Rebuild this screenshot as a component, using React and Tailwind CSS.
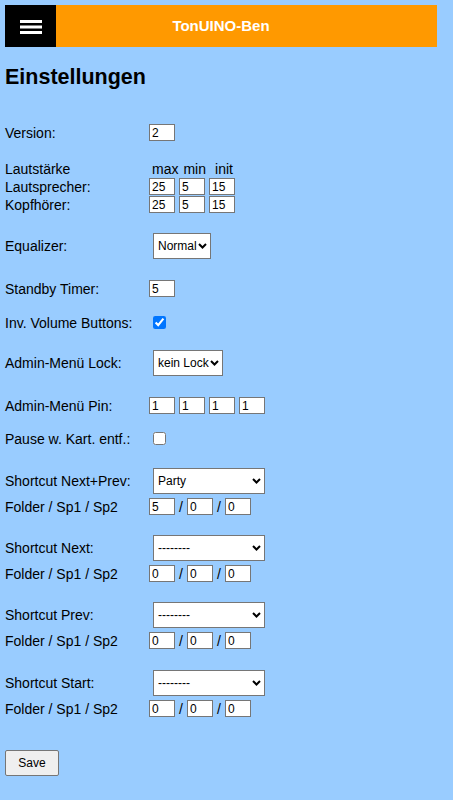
import { useState } from "react";

const font = { fontFamily: '"Liberation Sans", Arial, sans-serif' };

function NumBox({ value, onChange }) {
  return (
    <input
      type="text"
      value={value}
      onChange={(e) => onChange(e.target.value)}
      className="w-[26px] h-[17px] border border-[#767676] bg-white px-[2px] text-[12px] leading-[15px] text-black outline-none"
    />
  );
}

function Chevron() {
  return (
    <svg
      className="absolute right-[4px] top-1/2 -translate-y-1/2 pointer-events-none"
      width="9"
      height="6"
      viewBox="0 0 9 6"
      fill="none"
    >
      <path d="M1 1 L4.5 4.5 L8 1" stroke="#000" strokeWidth="2" />
    </svg>
  );
}

function Dropdown({ value, options, onChange, width }) {
  return (
    <div className={`relative ml-[4px] ${width}`}>
      <select
        value={value}
        onChange={(e) => onChange(e.target.value)}
        className="appearance-none w-full h-[26px] border border-[#767676] bg-white pl-[4px] pr-[1px] text-[12px] text-black outline-none"
      >
        {options.map((o) => (
          <option key={o} value={o}>
            {o}
          </option>
        ))}
      </select>
      <Chevron />
    </div>
  );
}

function Row({ label, className = "", children }) {
  return (
    <div className={`flex items-center ${className}`}>
      <div className="w-[144px] shrink-0">{label}</div>
      {children}
    </div>
  );
}

const shortcutOptions = ["--------", "Party", "Hörspiel", "Album", "Einzel"];

function Shortcut({ label, top, data, onChange }) {
  return (
    <>
      <Row label={label} className={`h-[26px] ${top}`}>
        <Dropdown
          value={data.mode}
          options={shortcutOptions}
          width="w-[112px]"
          onChange={(v) => onChange({ ...data, mode: v })}
        />
      </Row>
      <Row label="Folder / Sp1 / Sp2" className="h-[17px] mt-[4px]">
        <NumBox value={data.folder} onChange={(v) => onChange({ ...data, folder: v })} />
        <span className="w-[12px] text-center">/</span>
        <NumBox value={data.sp1} onChange={(v) => onChange({ ...data, sp1: v })} />
        <span className="w-[12px] text-center">/</span>
        <NumBox value={data.sp2} onChange={(v) => onChange({ ...data, sp2: v })} />
      </Row>
    </>
  );
}

export default function App() {
  const [version, setVersion] = useState("2");
  const [speaker, setSpeaker] = useState({ max: "25", min: "5", init: "15" });
  const [phones, setPhones] = useState({ max: "25", min: "5", init: "15" });
  const [eq, setEq] = useState("Normal");
  const [standby, setStandby] = useState("5");
  const [invVolume, setInvVolume] = useState(true);
  const [lock, setLock] = useState("kein Lock");
  const [pin, setPin] = useState(["1", "1", "1", "1"]);
  const [pause, setPause] = useState(false);
  const [shortcuts, setShortcuts] = useState([
    { mode: "Party", folder: "5", sp1: "0", sp2: "0" },
    { mode: "--------", folder: "0", sp1: "0", sp2: "0" },
    { mode: "--------", folder: "0", sp1: "0", sp2: "0" },
    { mode: "--------", folder: "0", sp1: "0", sp2: "0" },
  ]);

  const setShortcut = (i, v) =>
    setShortcuts((list) => list.map((s, idx) => (idx === i ? v : s)));

  return (
    <div
      className="min-h-[800px] bg-[#99ccff] text-black text-[14px] leading-[16px] pt-[5px] pb-[20px]"
      style={font}
    >
      {/* Header */}
      <div className="ml-[5px] w-[432px] h-[42px] grid grid-cols-[51px_1fr_51px] bg-[#ff9900]">
        <div className="bg-black flex items-center justify-center pt-[1px]">
          <svg width="22" height="14" viewBox="0 0 22 14">
            <rect x="0" y="0" width="22" height="3" fill="#fff" />
            <rect x="0" y="5.5" width="22" height="3" fill="#fff" />
            <rect x="0" y="11" width="22" height="3" fill="#fff" />
          </svg>
        </div>
        <div className="flex items-center justify-center text-white font-bold text-[15px]">
          TonUINO-Ben
        </div>
        <div />
      </div>

      <div className="px-[5px]">
        <h1 className="mt-[18px] h-[24px] leading-[24px] text-[21.5px] font-bold">
          Einstellungen
        </h1>

        <Row label="Version:" className="h-[17px] mt-[35px]">
          <NumBox value={version} onChange={setVersion} />
        </Row>

        <Row label="Lautstärke" className="h-[16px] mt-[20px]">
          <span className="ml-[3px]">max</span>
          <span className="ml-[5px]">min</span>
          <span className="ml-[9px]">init</span>
        </Row>
        <Row label="Lautsprecher:" className="h-[17px] mt-[1px]">
          <div className="flex gap-[4px]">
            <NumBox value={speaker.max} onChange={(v) => setSpeaker({ ...speaker, max: v })} />
            <NumBox value={speaker.min} onChange={(v) => setSpeaker({ ...speaker, min: v })} />
            <NumBox value={speaker.init} onChange={(v) => setSpeaker({ ...speaker, init: v })} />
          </div>
        </Row>
        <Row label="Kopfhörer:" className="h-[17px] mt-[1px]">
          <div className="flex gap-[4px]">
            <NumBox value={phones.max} onChange={(v) => setPhones({ ...phones, max: v })} />
            <NumBox value={phones.min} onChange={(v) => setPhones({ ...phones, min: v })} />
            <NumBox value={phones.init} onChange={(v) => setPhones({ ...phones, init: v })} />
          </div>
        </Row>

        <Row label="Equalizer:" className="h-[26px] mt-[20px]">
          <Dropdown
            value={eq}
            options={["Normal", "Pop", "Rock", "Jazz", "Classic", "Bass"]}
            width="w-[58px]"
            onChange={setEq}
          />
        </Row>

        <Row label="Standby Timer:" className="h-[17px] mt-[21px]">
          <NumBox value={standby} onChange={setStandby} />
        </Row>

        <Row label="Inv. Volume Buttons:" className="h-[17px] mt-[17px]">
          <input
            type="checkbox"
            checked={invVolume}
            onChange={(e) => setInvVolume(e.target.checked)}
            className="ml-[4px] w-[13px] h-[13px]"
          />
        </Row>

        <Row label="Admin-Menü Lock:" className="h-[26px] mt-[19px]">
          <Dropdown
            value={lock}
            options={["kein Lock", "Pin", "Rechnen"]}
            width="w-[70px]"
            onChange={setLock}
          />
        </Row>

        <Row label="Admin-Menü Pin:" className="h-[17px] mt-[21px]">
          <div className="flex gap-[4px]">
            {pin.map((p, i) => (
              <NumBox
                key={i}
                value={p}
                onChange={(v) => setPin(pin.map((x, j) => (j === i ? v : x)))}
              />
            ))}
          </div>
        </Row>

        <Row label="Pause w. Kart. entf.:" className="h-[17px] mt-[16px]">
          <input
            type="checkbox"
            checked={pause}
            onChange={(e) => setPause(e.target.checked)}
            className="ml-[4px] w-[13px] h-[13px]"
          />
        </Row>

        <Shortcut label="Shortcut Next+Prev:" top="mt-[21px]" data={shortcuts[0]} onChange={(v) => setShortcut(0, v)} />
        <Shortcut label="Shortcut Next:" top="mt-[20px]" data={shortcuts[1]} onChange={(v) => setShortcut(1, v)} />
        <Shortcut label="Shortcut Prev:" top="mt-[20px]" data={shortcuts[2]} onChange={(v) => setShortcut(2, v)} />
        <Shortcut label="Shortcut Start:" top="mt-[21px]" data={shortcuts[3]} onChange={(v) => setShortcut(3, v)} />

        <button className="mt-[33px] w-[54px] h-[26px] bg-[#efefef] border border-[#767676] rounded-[2px] text-[12px] text-black">
          Save
        </button>
      </div>
    </div>
  );
}
